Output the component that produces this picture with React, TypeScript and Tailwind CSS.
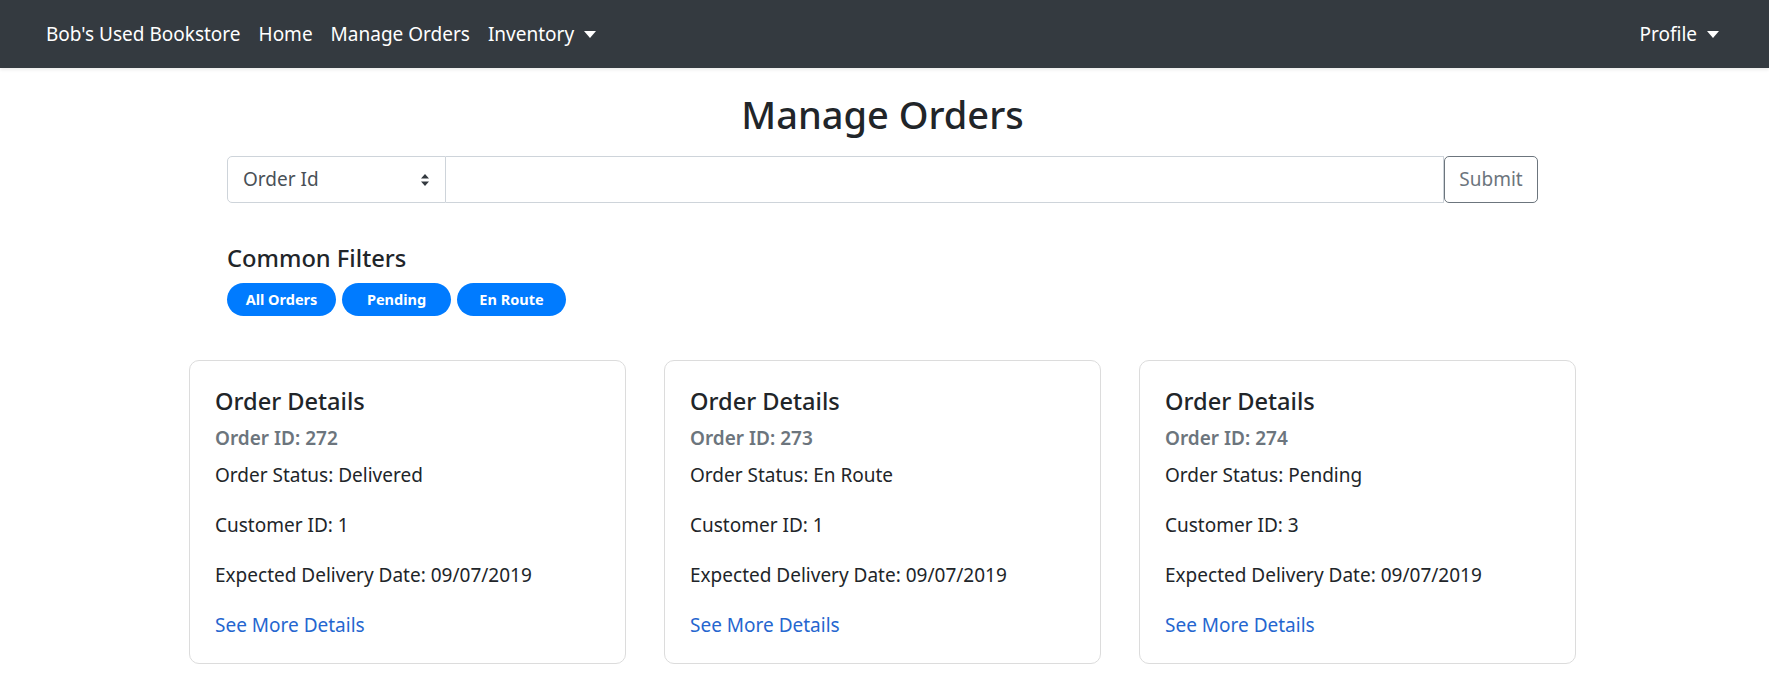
import React from "react";

interface Order {
  id: number;
  status: string;
  customerId: number;
  delivery: string;
}

const ORDERS: Order[] = [
  { id: 272, status: "Delivered", customerId: 1, delivery: "09/07/2019" },
  { id: 273, status: "En Route", customerId: 1, delivery: "09/07/2019" },
  { id: 274, status: "Pending", customerId: 3, delivery: "09/07/2019" },
];

const FILTERS = ["All Orders", "Pending", "En Route"];

function Caret() {
  return (
    <span className="ml-[10px] inline-block h-0 w-0 border-x-[6px] border-t-[7px] border-x-transparent border-t-white align-middle" />
  );
}

function OrderCard({ order }: { order: Order }) {
  return (
    <div className="w-[437px] rounded-[10px] border border-[#dcdcdc] bg-white px-[25px] pt-[25px] pb-[23px]">
      <h5 className="text-[23.6px] leading-[30px] font-medium text-[#212529]">Order Details</h5>
      <h6 className="mt-[10px] mb-[10px] text-[19px] leading-[24px] font-semibold text-[#6c757d]">
        Order ID: {order.id}
      </h6>
      <p className="mb-[20px] leading-[30px]">Order Status: {order.status}</p>
      <p className="mb-[20px] leading-[30px]">Customer ID: {order.customerId}</p>
      <p className="mb-[20px] leading-[30px]">Expected Delivery Date: {order.delivery}</p>
      <a href="#" className="block leading-[30px] text-[#2566cf]">
        See More Details
      </a>
    </div>
  );
}

export default function App() {
  return (
    <div
      className="min-h-screen bg-white text-[19px] text-[#212529]"
      style={{ fontFamily: '"Noto Sans", "Open Sans", sans-serif' }}
    >
      {/* Navbar */}
      <nav className="flex h-[68px] items-center justify-between bg-[#343a40] pl-[46px] pr-[50px] shadow-[0_2px_3px_rgba(0,0,0,0.08)]">
        <div className="flex items-center gap-[18px] text-white">
          <a href="#">Bob's Used Bookstore</a>
          <a href="#">Home</a>
          <a href="#">Manage Orders</a>
          <a href="#" className="flex items-center">
            Inventory
            <Caret />
          </a>
        </div>
        <a href="#" className="flex items-center text-white">
          Profile
          <Caret />
        </a>
      </nav>

      <div className="mx-auto w-[1425px] pl-[17px] pr-[21px]">
        <h2 className="mt-[22px] text-center text-[38px] leading-[48px] font-medium">Manage Orders</h2>

        {/* Search */}
        <div className="mt-[18px] flex px-[38px]">
          <div className="relative flex h-[47px] w-[219px] items-center rounded-l-[5px] border border-[#ced4da] pl-[15px] text-[#495057]">
            Order Id
            <svg className="absolute right-[15px] top-1/2 -translate-y-1/2" width="10" height="14" viewBox="0 0 10 14">
              <path d="M5 1 L9 5.5 H1 Z M5 13 L9 8.5 H1 Z" fill="#343a40" />
            </svg>
          </div>
          <input className="h-[47px] flex-1 border border-l-0 border-[#ced4da] outline-none" />
          <button className="h-[47px] w-[94px] rounded-[5px] border border-[#6c757d] text-[#6c757d]">
            Submit
          </button>
        </div>

        {/* Filters */}
        <div className="mt-[40px] pl-[38px]">
          <h5 className="mb-[10px] text-[23.7px] leading-[30px] font-medium">Common Filters</h5>
          <div className="flex gap-[6px]">
            {FILTERS.map((f) => (
              <span
                key={f}
                className="flex h-[33px] w-[109px] items-center justify-center rounded-full bg-[#007bff] text-[14.5px] font-bold text-white"
              >
                {f}
              </span>
            ))}
          </div>
        </div>

        {/* Orders */}
        <div className="mt-[44px] flex justify-between pb-[20px]">
          {ORDERS.map((o) => (
            <OrderCard key={o.id} order={o} />
          ))}
        </div>
      </div>
    </div>
  );
}
